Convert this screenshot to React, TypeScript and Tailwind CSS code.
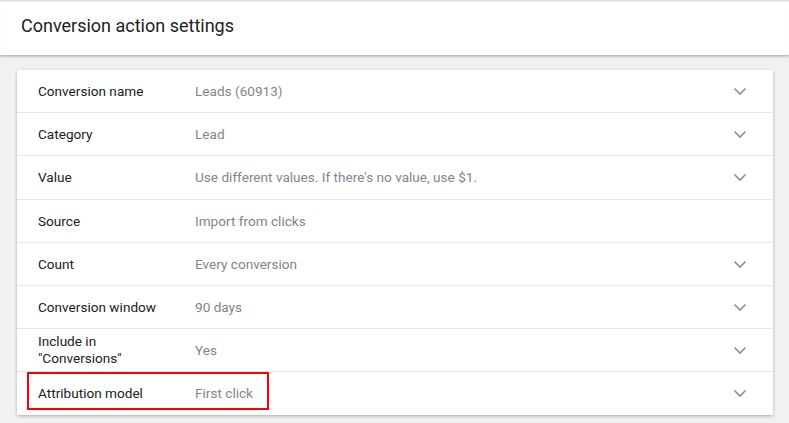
import React from "react";

const rows: { label: React.ReactNode; value: string; chevron: boolean; highlight?: boolean; h: string }[] = [
  { label: "Conversion name", value: "Leads (60913)", chevron: true, h: "h-[43px]" },
  { label: "Category", value: "Lead", chevron: true, h: "h-[43px]" },
  { label: "Value", value: "Use different values. If there's no value, use $1.", chevron: true, h: "h-[44px]" },
  { label: "Source", value: "Import from clicks", chevron: false, h: "h-[43px]" },
  { label: "Count", value: "Every conversion", chevron: true, h: "h-[43px]" },
  { label: "Conversion window", value: "90 days", chevron: true, h: "h-[43px]" },
  { label: <>Include in<br />"Conversions"</>, value: "Yes", chevron: true, h: "h-[43px]" },
  { label: "Attribution model", value: "First click", chevron: true, highlight: true, h: "h-[43px]" },
];

function Chevron() {
  return (
    <svg width="14" height="9" viewBox="0 0 14 9" className="block">
      <path d="M1.5 1.5 L7 7 L12.5 1.5" fill="none" stroke="#8a8f96" strokeWidth="1.6" />
    </svg>
  );
}

export default function App() {
  return (
    <div className="w-[789px] h-[423px] overflow-hidden bg-[#f1f1f1] font-['Roboto',sans-serif]">
      <div className="h-[55px] pb-[4px] bg-white shadow-[0_1px_3px_rgba(0,0,0,0.35),inset_0_2px_2px_-1px_rgba(0,0,0,0.2)] flex items-center pl-[21px] relative z-10">
        <h1 className="text-[18px] text-[#212121] leading-none">Conversion action settings</h1>
      </div>
      <div className="pt-[15px] pl-[17px] pr-[16px]">
        <div className="bg-white shadow-[0_1px_3px_rgba(0,0,0,0.3)]">
          {rows.map((r, i) => (
            <div
              key={i}
              className={`relative ${r.h} flex items-center ${i < rows.length - 1 ? "border-b border-[#e8e8e8]" : ""}`}
            >
              {r.highlight && (
                <div className="absolute left-[10px] top-[0px] w-[242px] h-[38px] border-2 border-[#ff0000]" />
              )}
              <div className="w-[178px] shrink-0 pl-[21px] text-[13.6px] leading-[17px] text-[#212121]">{r.label}</div>
              <div className="flex-1 text-[13.6px] text-[#80868b]">{r.value}</div>
              <div className="w-[40px] shrink-0 flex justify-start">
                {r.chevron && <Chevron />}
              </div>
            </div>
          ))}
        </div>
      </div>
    </div>
  );
}
